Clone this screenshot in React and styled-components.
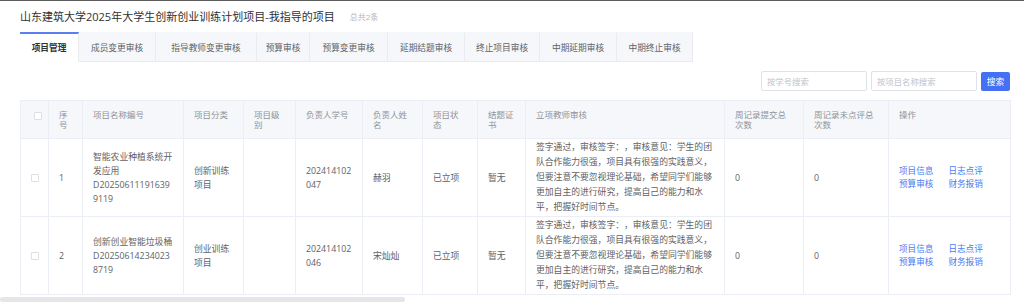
import React from "react";
import styled, { createGlobalStyle } from "styled-components";

const Global = createGlobalStyle`
  * { box-sizing: border-box; }
  html, body { margin: 0; padding: 0; background: #fff; }
  body {
    font-family: "Open Sans", "Noto Sans CJK SC", sans-serif;
    color: #606266;
    border-top: 1px solid #5c5c5c;
    overflow: hidden;
    text-spacing-trim: space-all;
  }
`;

const Page = styled.div`
  padding: 0 14px 0 20px;
  width: 1024px;
`;

const TitleBar = styled.div`
  height: 31px;
  display: flex;
  align-items: center;
  gap: 15px;
`;

const Title = styled.h1`
  margin: 0;
  font-size: 11px;
  font-weight: 400;
  color: #303133;
  line-height: 14px;
`;

const Count = styled.span`
  font-size: 8px;
  color: #b4b7bd;
`;

const TabBar = styled.div`
  display: flex;
  height: 30px;
`;

const Tab = styled.div`
  width: ${(p) => p.$w}px;
  display: flex;
  align-items: center;
  justify-content: center;
  font-size: 8.7px;
  font-weight: ${(p) => (p.$active ? 700 : 400)};
  color: ${(p) => (p.$active ? "#303133" : "#606266")};
  background: ${(p) => (p.$active ? "#fff" : "#f5f7fa")};
  border-top: 2px solid ${(p) => (p.$active ? "#5b7ff0" : "#f5f7fa")};
  border-right: 1px solid #e9ebef;
  border-bottom: 1px solid ${(p) => (p.$active ? "#fff" : "#e9ebef")};
`;

const SearchRow = styled.div`
  display: flex;
  justify-content: flex-end;
  align-items: center;
  gap: 4px;
  margin: 9px 0 9px;
  height: 20px;
`;

const Input = styled.input`
  width: 106px;
  height: 20px;
  border: 1px solid #dfe2e8;
  border-radius: 2px;
  padding: 0 5px;
  font-family: inherit;
  font-size: 8.4px;
  color: #606266;
  outline: none;
  &::placeholder { color: #c0c4cc; }
`;

const Button = styled.button`
  width: 29px;
  height: 19px;
  border: none;
  border-radius: 2px;
  background: #4470f4;
  color: #fff;
  font-family: inherit;
  font-size: 8.8px;
  padding: 0;
`;

const Table = styled.table`
  width: 990px;
  table-layout: fixed;
  border-collapse: collapse;
  border: 1px solid #ebeef5;
`;

const Th = styled.th`
  height: 38px;
  background: #f5f7fa;
  color: #909399;
  font-weight: 400;
  font-size: 8.5px;
  line-height: 10px;
  text-align: ${(p) => (p.$center ? "center" : "left")};
  vertical-align: top;
  padding: 9px 4px 0 10px;
  border-right: 1px solid #ebeef5;
  border-bottom: 1px solid #ebeef5;
  white-space: pre-line;
`;

const Td = styled.td`
  font-size: 8.8px;
  line-height: ${(p) => (p.$lh ? p.$lh : 14)}px;
  color: #606266;
  text-align: ${(p) => (p.$center ? "center" : "left")};
  vertical-align: middle;
  padding: 1px 10px;
  border-right: 1px solid #ebeef5;
  border-bottom: 1px solid #ebeef5;
  word-break: break-all;
`;

const Code = styled.div`
  word-break: break-all;
`;

const Check = styled.span`
  display: inline-block;
  width: 8px;
  height: 8px;
  border: 1px solid #dcdfe6;
  border-radius: 1px;
  background: #fff;
  vertical-align: middle;
`;

const Ops = styled.div`
  display: grid;
  grid-template-columns: auto auto;
  justify-content: start;
  column-gap: 15px;
  line-height: 13px;
`;

const Link = styled.a`
  color: #4a7cf2;
  font-size: 8.6px;
  text-decoration: none;
  cursor: pointer;
`;

const ScrollThumb = styled.div`
  position: fixed;
  left: 0;
  bottom: 0;
  width: 405px;
  height: 5px;
  background: #e6e6e6;
  border-radius: 3px;
`;

const tabs = [
  ["项目管理", 59],
  ["成员变更审核", 77],
  ["指导教师变更审核", 101],
  ["预算审核", 53],
  ["预算变更审核", 78],
  ["延期结题审核", 77],
  ["终止项目审核", 75],
  ["中期延期审核", 77],
  ["中期终止审核", 76],
];

const cols = [
  ["", 28],
  ["序\n号", 34],
  ["项目名称编号", 101],
  ["项目分类", 60],
  ["项目级\n别", 52],
  ["负责人学号", 67],
  ["负责人姓\n名", 60],
  ["项目状\n态", 55],
  ["结题证\n书", 48],
  ["立项教师审核", 199],
  ["周记录提交总\n次数", 79],
  ["周记录未点评总\n次数", 85],
  ["操作", 122],
];

const review =
  "签字通过，审核签字：，审核意见：学生的团队合作能力很强，项目具有很强的实践意义，但要注意不要忽视理论基础，希望同学们能够更加自主的进行研究，提高自己的能力和水平，把握好时间节点。";

const rows = [
  {
    no: 1,
    name: "智能农业种植系统开发应用",
    code: "D202506111916399119",
    type: "创新训练项目",
    sid: "202414102047",
    person: "赫羽",
  },
  {
    no: 2,
    name: "创新创业智能垃圾桶",
    code: "D202506142340238719",
    type: "创业训练项目",
    sid: "202414102046",
    person: "宋灿灿",
  },
];

export default function App() {
  return (
    <Page>
      <Global />
      <TitleBar>
        <Title>山东建筑大学2025年大学生创新创业训练计划项目-我指导的项目</Title>
        <Count>总共2条</Count>
      </TitleBar>
      <TabBar>
        {tabs.map(([t, w], i) => (
          <Tab key={t} $w={w} $active={i === 0}>
            {t}
          </Tab>
        ))}
      </TabBar>
      <SearchRow>
        <Input placeholder="按学号搜索" />
        <Input placeholder="按项目名称搜索" />
        <Button>搜索</Button>
      </SearchRow>
      <Table>
        <colgroup>
          {cols.map(([c, w], i) => (
            <col key={i} style={{ width: w }} />
          ))}
        </colgroup>
        <thead>
          <tr>
            {cols.map(([c], i) =>
              i === 0 ? (
                <Th key={i} $center>
                  <Check />
                </Th>
              ) : (
                <Th key={i}>{c}</Th>
              )
            )}
          </tr>
        </thead>
        <tbody>
          {rows.map((r) => (
            <tr key={r.no}>
              <Td $center>
                <Check />
              </Td>
              <Td>{r.no}</Td>
              <Td>
                <div>{r.name}</div>
                <Code>{r.code}</Code>
              </Td>
              <Td>{r.type}</Td>
              <Td></Td>
              <Td>{r.sid}</Td>
              <Td>{r.person}</Td>
              <Td>已立项</Td>
              <Td>暂无</Td>
              <Td $lh={15}>{review}</Td>
              <Td>0</Td>
              <Td>0</Td>
              <Td>
                <Ops>
                  <Link>项目信息</Link>
                  <Link>日志点评</Link>
                  <Link>预算审核</Link>
                  <Link>财务报销</Link>
                </Ops>
              </Td>
            </tr>
          ))}
        </tbody>
      </Table>
      <ScrollThumb />
    </Page>
  );
}
